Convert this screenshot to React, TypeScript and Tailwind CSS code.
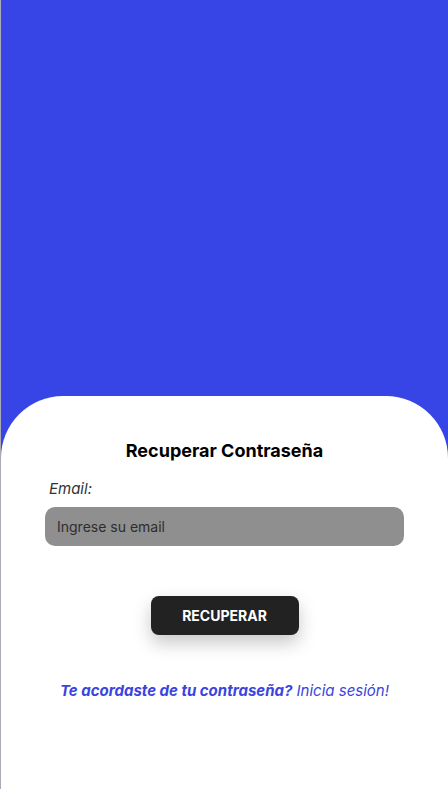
export default function App() {
  return (
    <div
      className="flex h-[789px] w-[448px] flex-col border-l border-[#a9a9b8] bg-[#3744e6]"
      style={{ fontFamily: "Inter, 'Noto Sans', sans-serif" }}
    >
      <div className="h-[396px] shrink-0" />
      <div className="flex flex-1 flex-col rounded-t-[62px] bg-white">
        <h1 className="mt-[41px] text-center text-[18px] font-bold leading-[28px] text-black">
          Recuperar Contraseña
        </h1>
        <label className="ml-[48px] mt-[13px] text-[15px] italic leading-[22px] text-[#333]">
          Email:
        </label>
        <input
          placeholder="Ingrese su email"
          className="mx-[44px] mt-[7px] h-[39px] rounded-[10px] bg-[#8f8f8f] px-3 text-[14px] text-[#222] placeholder:text-[#2d2d2d] outline-none"
        />
        <button className="mx-auto mt-[50px] h-[39px] w-[148px] rounded-[8px] bg-[#222] text-[14px] font-bold text-white shadow-[0_8px_18px_rgba(0,0,0,0.22)]">
          RECUPERAR
        </button>
        <p className="mt-[45px] text-center text-[15px] italic leading-[22px] text-[#3a44e0]">
          <span className="font-bold">Te acordaste de tu contraseña?</span>{" "}
          Inicia sesión!
        </p>
      </div>
    </div>
  );
}
